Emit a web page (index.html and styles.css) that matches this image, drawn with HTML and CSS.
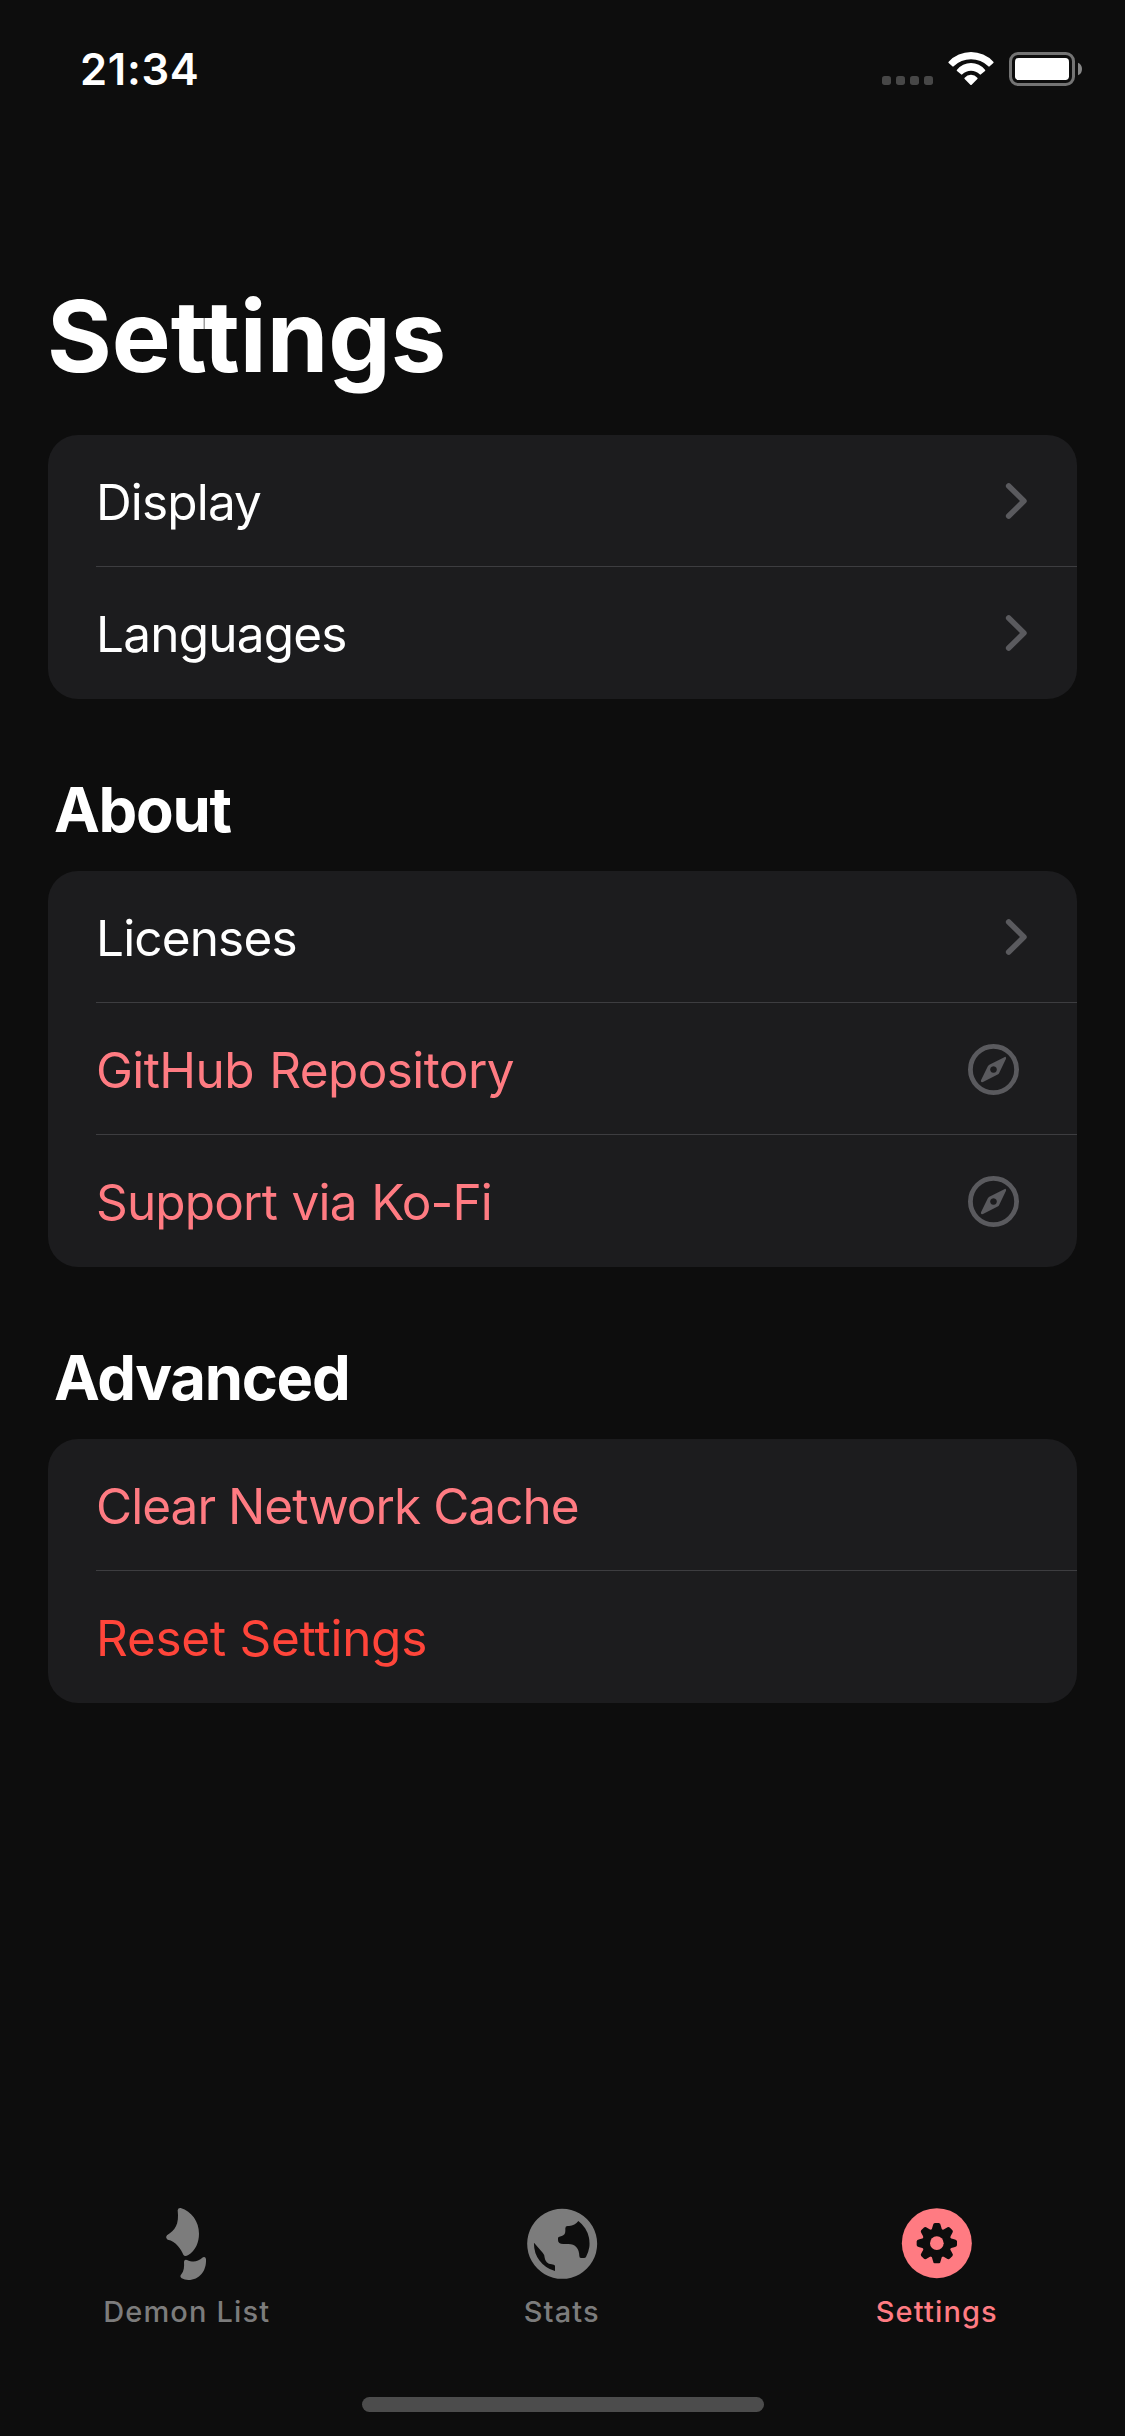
FILE: index.html
```html
<!DOCTYPE html>
<html lang="en">
<head>
<meta charset="utf-8">
<title>Settings</title>
<link rel="stylesheet" href="styles.css">
</head>
<body>
<svg class="symbols" aria-hidden="true">
  <symbol id="chevron" viewBox="0 0 24 38">
    <path d="M3.7 3.9 18.9 19 3.7 34.1" fill="none" stroke="currentColor" stroke-width="5.6" stroke-linecap="round" stroke-linejoin="round"/>
  </symbol>
  <symbol id="compass" viewBox="0 0 156 156">
    <circle cx="79.5" cy="79.5" r="69.3" fill="none" stroke="currentColor" stroke-width="14.4"/>
    <path fill="currentColor" fill-rule="evenodd" d="M112 42.500 67 65.500Q64 67 62.500 70L42 112Q41 115 43 117Q45 118 48 117L92 94.500Q95 93 96.500 90L117 47Q118 44 116 42Q114 41 112 42.500ZM79.500 69.500a10 10 0 1 0 .01 0Z"/>
  </symbol>
</svg>

<header class="status-bar">
  <span class="time">21:34</span>
  <svg class="status-icons" viewBox="0 0 720 240">
    <g fill="#474747">
      <rect x="66" y="138" width="27" height="27" rx="8"/>
      <rect x="108" y="138" width="27" height="27" rx="8"/>
      <rect x="150" y="138" width="27" height="27" rx="8"/>
      <rect x="192" y="138" width="27" height="27" rx="8"/>
    </g>
    <g fill="#fff">
      <path d="M266 99Q264 97 266 95A92 92 0 0 1 400 95Q402 97 400 99L389 109Q387 111 385 109A74 74 0 0 0 281 109Q279 111 277 109Z"/>
      <path d="M291 123Q289 121 291 119A54 54 0 0 1 375 119Q377 121 375 123L363 133Q361 135 359 133A37 37 0 0 0 307 133Q305 135 303 133Z"/>
      <path d="M314 147Q312 145 314 143A25 25 0 0 1 352 143Q354 145 352 147L335 164Q333 166 331 164Z"/>
      <rect x="465" y="84" width="162" height="66" rx="11"/>
    </g>
    <rect x="451.500" y="70.500" width="189" height="93" rx="23" fill="none" stroke="#747474" stroke-width="9"/>
    <path d="M654 98Q666 103 666 117Q666 131 654 136Z" fill="#868686"/>
  </svg>
</header>

<main class="content">
  <h1 class="title">Settings</h1>
  <ul class="card">
    <li class="row"><span class="label display">Display</span><svg class="chevron"><use href="#chevron"/></svg></li>
    <li class="row"><span class="label languages">Languages</span><svg class="chevron"><use href="#chevron"/></svg></li>
  </ul>
  <h2 class="heading">About</h2>
  <ul class="card">
    <li class="row"><span class="label licenses">Licenses</span><svg class="chevron"><use href="#chevron"/></svg></li>
    <li class="row"><span class="label link github">GitHub Repository</span><svg class="compass"><use href="#compass"/></svg></li>
    <li class="row"><span class="label link support">Support via Ko-Fi</span><svg class="compass"><use href="#compass"/></svg></li>
  </ul>
  <h2 class="heading">Advanced</h2>
  <ul class="card">
    <li class="row"><span class="label link clear">Clear Network Cache</span></li>
    <li class="row"><span class="label danger">Reset Settings</span></li>
  </ul>
</main>

<nav class="tab-bar">
  <a class="tab">
    <svg class="tab-icon" viewBox="30 48 225 225" fill="currentColor">
      <path d="M113 61Q114 53 122 54C155 64 177 95 177 131C177 157 167 181 145 195Q134 201 130 194C124 179 108 153 83 149Q75 143 81 136C105 121 118 104 113 61Z"/>
      <path d="M132 215Q133 207 141 210C158 217 170 218 189 202Q196 198 198 207C200 243 178 270 145 270Q134 270 125 265Q118 260 124 253C132 243 133 230 132 215Z"/>
    </svg>
    <span class="tab-label">Demon List</span>
  </a>
  <a class="tab">
    <svg class="tab-icon" viewBox="75 48 225 225" fill="currentColor">
      <path fill-rule="evenodd" d="M186.500 56.500a105 105 0 1 0 .01 0ZM235 93A84 84 0 0 1 258 201Q256 204 252 204H243Q238 204 238 198C238 176 226 162 205 162H190Q174 162 174 150V145Q174 141 178 140L183 139Q196 136 196 123V115Q196 108 203 108H207Q225 107 235 93ZM102 158 128 188Q134 194 134 203Q136 220 155 223L161 224Q165 225 165 229V243A84 84 0 0 1 102 158Z"/>
    </svg>
    <span class="tab-label">Stats</span>
  </a>
  <a class="tab active">
    <svg class="tab-icon" viewBox="120 48 225 225" fill="currentColor">
      <defs><path id="teeth" d="M-18-38Q-14-42-12-52Q-11-60-6-60.500H6Q11-60 12-52Q14-42 18-38V38Q14 42 12 52Q11 60 6 60.500H-6Q-11 60-12 52Q-14 42-18 38Z"/></defs>
      <circle cx="230.500" cy="159.500" r="105"/>
      <g class="gear" transform="translate(230.500 159.500)">
        <circle r="43"/>
        <use href="#teeth"/>
        <use href="#teeth" transform="rotate(45)"/>
        <use href="#teeth" transform="rotate(90)"/>
        <use href="#teeth" transform="rotate(135)"/>
      </g>
      <circle cx="230.500" cy="159.500" r="20.500"/>
    </svg>
    <span class="tab-label">Settings</span>
  </a>
</nav>
<div class="home-indicator"></div>
</body>
</html>
```
FILE: styles.css
```css
* {
  box-sizing: border-box;
}

body {
  margin: 0;
  width: 1125px;
  height: 2436px;
  display: flex;
  flex-direction: column;
  background: #0d0d0d;
  color: #fff;
  font-family: Inter, "Liberation Sans", sans-serif;
  overflow: hidden;
}

.symbols {
  display: none;
}

svg {
  display: block;
  flex: none;
}

.status-bar {
  height: 132px;
  display: flex;
  justify-content: space-between;
  align-items: flex-start;
  padding: 30px 25px 0 80px;
}

.time {
  margin-top: 13px;
  font-size: 43.5px;
  line-height: 52px;
  font-weight: 600;
  letter-spacing: 0.7px;
}

.status-icons {
  width: 240px;
  height: 80px;
}

.content {
  flex: 1;
  padding: 144px 48px 0;
}

.title {
  margin: 0 0 39px -1px;
  font-size: 99px;
  line-height: 120px;
  font-weight: 700;
}

.heading {
  margin: 73px 0 24px 6px;
  font-size: 61.5px;
  line-height: 75px;
  font-weight: 700;
  letter-spacing: -1.3px;
}

.card {
  margin: 0;
  padding: 0 0 0 48px;
  list-style: none;
  background: #1c1c1e;
  border-radius: 30px;
}

.row {
  height: 132px;
  display: flex;
  justify-content: space-between;
  align-items: flex-start;
  padding-right: 48px;
  border-bottom: 1px solid #3d3d40;
}

.row:last-child {
  border-bottom: 0;
}

.label {
  margin-top: 37px;
  font-size: 49.5px;
  line-height: 60px;
  letter-spacing: -0.8px;
  white-space: nowrap;
}

.display,
.licenses {
  letter-spacing: -0.85px;
}

.link {
  color: #ff7b82;
}

.github {
  letter-spacing: -0.6px;
  word-spacing: 2px;
}

.support {
  letter-spacing: -0.85px;
  word-spacing: 1.5px;
}

.clear {
  letter-spacing: -0.97px;
}

.danger {
  color: #ff453a;
  letter-spacing: -0.25px;
}

.chevron {
  width: 24px;
  height: 38px;
  margin-top: 47px;
  color: #5a5a5e;
}

.compass {
  width: 52px;
  height: 52px;
  margin: 40px 10px 0 0;
  color: #5a5a5e;
}

.tab-bar {
  height: 191px;
  display: grid;
  grid-template-columns: repeat(3, 1fr);
}

.tab {
  display: flex;
  flex-direction: column;
  align-items: center;
  gap: 13px;
  color: #7c7c7c;
}

.tab.active {
  color: #ff7b82;
}

.tab-icon {
  width: 75px;
  height: 75px;
}

.gear {
  fill: #0d0d0d;
}

.tab-label {
  margin-right: 1.5px;
  font-size: 29px;
  line-height: 35px;
  font-weight: 500;
  letter-spacing: 1.15px;
}

.home-indicator {
  width: 402px;
  height: 15px;
  margin: 0 auto 24px;
  border-radius: 7.5px;
  background: #4c4c4c;
}
```
